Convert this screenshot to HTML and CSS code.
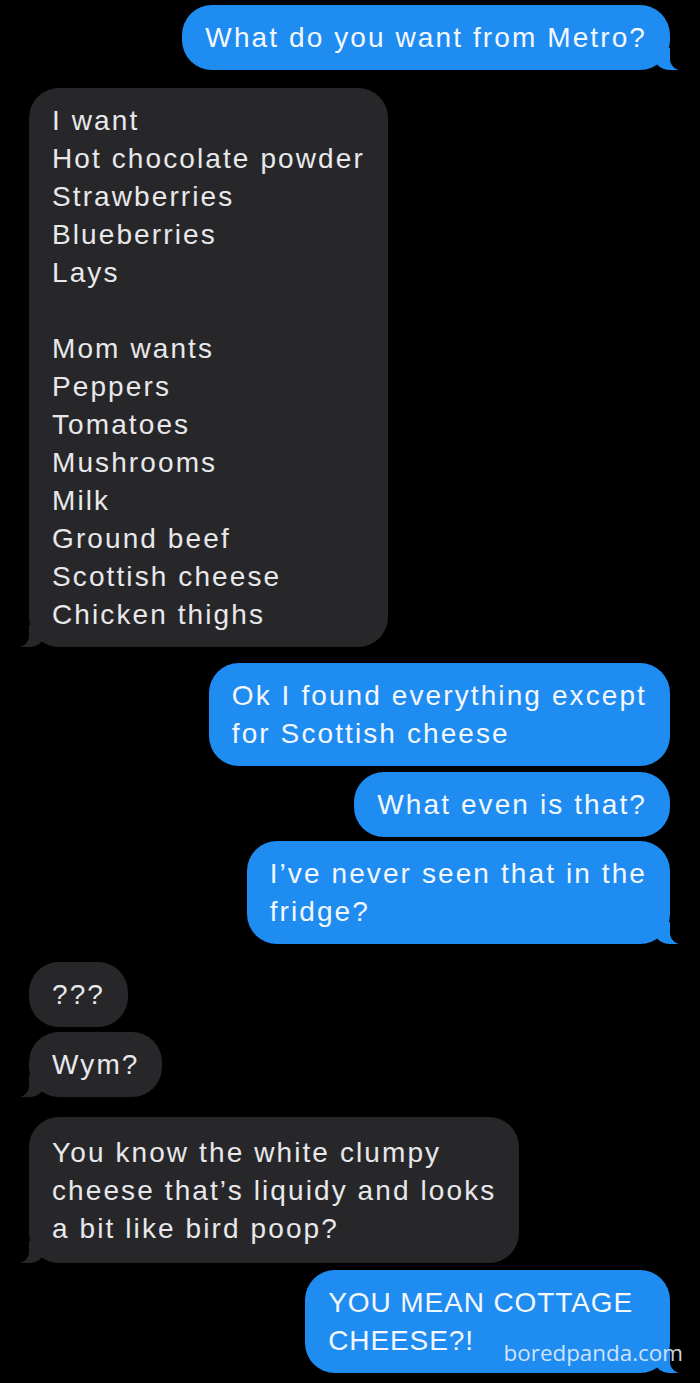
FILE: index.html
```html
<!DOCTYPE html>
<html lang="en">
<head>
<meta charset="utf-8">
<title>Messages</title>
<link rel="stylesheet" href="styles.css">
</head>
<body>
<main class="chat">
  <div class="msg sent tail">What do you want from Metro?</div>
  <div class="msg recv tail gap-18">I want<br>Hot chocolate powder<br>Strawberries<br>Blueberries<br>Lays<br><br>Mom wants<br>Peppers<br>Tomatoes<br>Mushrooms<br>Milk<br>Ground beef<br>Scottish cheese<br>Chicken thighs</div>
  <div class="msg sent gap-16">Ok I found everything except<br>for Scottish cheese</div>
  <div class="msg sent gap-6">What even is that?</div>
  <div class="msg sent tail gap-4">I’ve never seen that in the<br>fridge?</div>
  <div class="msg recv gap-18">???</div>
  <div class="msg recv tail gap-5">Wym?</div>
  <div class="msg recv tail gap-20 tall">You know the white clumpy<br>cheese that’s liquidy and looks<br>a bit like bird poop?</div>
  <div class="msg sent tail gap-7 caps">YOU MEAN COTTAGE<br>CHEESE?!</div>
</main>
<div class="watermark">boredpanda.com</div>
</body>
</html>
```

FILE: styles.css
```css
html, body {
  margin: 0;
  padding: 0;
  background: #000;
}

body {
  position: relative;
  width: 700px;
  height: 1383px;
  overflow: hidden;
}

.chat {
  display: flex;
  flex-direction: column;
  padding: 5px 30px 0 29px;
}

.msg {
  position: relative;
  padding: 14px 23px 13px 23px;
  border-radius: 30px;
  font-family: "Liberation Sans", Arial, sans-serif;
  font-size: 28px;
  line-height: 38px;
  letter-spacing: 2.1px;
  white-space: nowrap;
}

.caps {
  letter-spacing: 0.9px;
  padding-right: 37px;
}

.gap-4 { margin-top: 4px; }
.gap-5 { margin-top: 5px; }
.gap-6 { margin-top: 6px; }
.gap-7 { margin-top: 7px; }
.gap-16 { margin-top: 16px; }
.gap-18 { margin-top: 18px; }
.gap-20 { margin-top: 20px; }
.tall { padding-top: 17px; padding-bottom: 15px; }

.sent {
  align-self: flex-end;
  background: #1f8cf1;
  color: #f3f8ff;
}

.recv {
  align-self: flex-start;
  background: #27272a;
  color: #e8e8ea;
}

.tail.sent::before,
.tail.sent::after,
.tail.recv::before,
.tail.recv::after {
  content: "";
  position: absolute;
  bottom: 0;
  height: 22px;
}

.tail.sent::before {
  right: -8px;
  width: 24px;
  background: #1f8cf1;
  border-bottom-left-radius: 16px 14px;
}

.tail.sent::after {
  right: -12px;
  width: 12px;
  background: #000;
  border-bottom-left-radius: 11px;
}

.tail.recv::before {
  left: -8px;
  width: 24px;
  background: #27272a;
  border-bottom-right-radius: 16px 14px;
}

.tail.recv::after {
  left: -12px;
  width: 12px;
  background: #000;
  border-bottom-right-radius: 11px;
}

.watermark {
  position: absolute;
  right: 17px;
  bottom: 15px;
  font-family: "Open Sans", "DejaVu Sans", sans-serif;
  font-size: 22.4px;
  line-height: 30px;
  color: rgba(232, 240, 255, 0.88);
}
```
